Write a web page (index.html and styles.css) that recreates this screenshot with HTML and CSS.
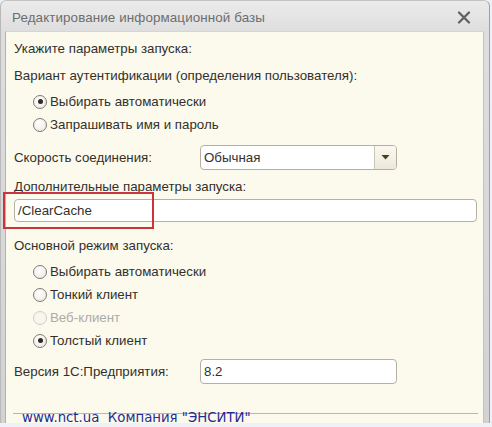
FILE: index.html
```html
<!DOCTYPE html>
<html lang="ru">
<head>
<meta charset="utf-8">
<link rel="stylesheet" href="styles.css">
</head>
<body>
<div class="window">
  <div class="titlebar">
    <span class="title">Редактирование информационной базы</span>
    <svg class="close" width="14" height="13" viewBox="0 0 14 13"><path d="M2 1.5 L12 11.5 M12 1.5 L2 11.5" stroke="#5f5f5f" stroke-width="2.2" stroke-linecap="round"/></svg>
  </div>
  <div class="panel">
    <div class="label first">Укажите параметры запуска:</div>
    <div class="label gap11">Вариант аутентификации (определения пользователя):</div>
    <div class="radios r1">
      <div class="radio-row"><span class="radio checked"></span><span>Выбирать автоматически</span></div>
      <div class="radio-row"><span class="radio"></span><span>Запрашивать имя и пароль</span></div>
    </div>
    <div class="field-row fr1">
      <span>Скорость соединения:</span>
      <div class="select"><span class="select-text">Обычная</span><span class="select-btn"><svg width="9" height="5" viewBox="0 0 9 5"><path d="M0.5 0 H8.5 L4.5 4.5 Z" fill="#4a3f1e"/></svg></span></div>
    </div>
    <div class="label gap9">Дополнительные параметры запуска:</div>
    <div class="input wide">/ClearCache</div>
    <div class="label gap16">Основной режим запуска:</div>
    <div class="radios r2">
      <div class="radio-row"><span class="radio"></span><span>Выбирать автоматически</span></div>
      <div class="radio-row"><span class="radio"></span><span>Тонкий клиент</span></div>
      <div class="radio-row disabled"><span class="radio"></span><span>Веб-клиент</span></div>
      <div class="radio-row"><span class="radio checked"></span><span>Толстый клиент</span></div>
    </div>
    <div class="field-row fr2">
      <span>Версия 1С:Предприятия:</span>
      <div class="input short">8.2</div>
    </div>
    <div class="footer-line"></div>
  </div>
  <div class="highlight"></div>
  <div class="watermark">www.nct.ua&nbsp; Компания "ЭНСИТИ"</div>
</div>
</body>
</html>
```
FILE: styles.css
```css
html, body {
  margin: 0;
  padding: 0;
}
body {
  width: 492px;
  height: 427px;
  background: #eef2f8;
  font-family: "Liberation Sans", Arial, sans-serif;
  font-size: 13.3px;
  color: #33302c;
  overflow: hidden;
}
.window {
  position: relative;
  width: 490px;
  height: 423px;
  display: flex;
  flex-direction: column;
  background: linear-gradient(to bottom, #ebebeb 0px, #dedede 30px, #d2d2d2 100%);
  border-left: 1px solid #b9b9b9;
  border-right: 1px solid #a0a0a0;
  border-top: 1px solid #c4c4c4;
  border-radius: 6px 6px 0 0;
  box-sizing: border-box;
}
.titlebar {
  height: 30px;
  flex: none;
  display: flex;
  align-items: center;
  justify-content: space-between;
  padding: 0 18px 0 11px;
}
.title {
  color: #6d6d6d;
  font-size: 13.4px;
  letter-spacing: 0.1px;
  padding-top: 2px;
}
.close {
  margin-top: 2px;
}
.panel {
  flex: 1;
  margin: 0 5px 0 4px;
  background: #fcfaec;
  border-left: 1px solid #b5b3a8;
  border-right: 1px solid #c6c4ba;
  border-top: 1px solid #d8d6cc;
  padding: 9px 7px 0 8px;
  display: flex;
  flex-direction: column;
  box-sizing: border-box;
}
.label {
  height: 16px;
  line-height: 16px;
  white-space: nowrap;
}
.gap11 { margin-top: 11px; }
.gap9 { margin-top: 9px; }
.gap16 { margin-top: 16px; }
.radios {
  display: flex;
  flex-direction: column;
  padding-left: 19px;
}
.r1 { margin-top: 6px; }
.r2 { margin-top: 6px; }
.radio-row {
  height: 23px;
  display: flex;
  align-items: center;
  gap: 3px;
  white-space: nowrap;
}
.radio {
  width: 14px;
  height: 14px;
  border-radius: 50%;
  border: 1px solid #7d7b76;
  background: radial-gradient(circle at 40% 35%, #ffffff 0%, #f2f0ea 60%, #dedbd2 100%);
  box-sizing: border-box;
  display: flex;
  align-items: center;
  justify-content: center;
  flex: none;
}
.radio.checked::after {
  content: "";
  width: 5px;
  height: 5px;
  border-radius: 50%;
  background: #2e2c2a;
}
.disabled {
  color: #ababab;
}
.disabled .radio {
  border-color: #cfcdc6;
  background: #f8f6ee;
}
.field-row {
  display: grid;
  grid-template-columns: 186px 197px;
  align-items: center;
  height: 25px;
}
.fr1 { margin-top: 9px; }
.fr2 { margin-top: 7px; }
.select {
  height: 25px;
  border: 1px solid #b4b1a2;
  border-radius: 4px;
  background: #ffffff;
  display: flex;
  box-sizing: border-box;
  overflow: hidden;
}
.select-text {
  flex: 1;
  padding-left: 3px;
  line-height: 23px;
}
.select-btn {
  width: 21px;
  border-left: 1px solid #c9c6b7;
  background: linear-gradient(to bottom, #fbf9ef, #ece9db);
  display: flex;
  align-items: center;
  justify-content: center;
}
.input {
  border: 1px solid #b4b1a2;
  border-radius: 4px;
  background: #ffffff;
  box-sizing: border-box;
  padding-left: 3px;
  white-space: nowrap;
}
.input.wide {
  margin-top: 4px;
  height: 23px;
  line-height: 21px;
  width: 463px;
}
.input.short {
  height: 25px;
  line-height: 23px;
}
.footer-line {
  margin-top: 29px;
  margin-left: -1px;
  width: 465px;
  height: 1px;
  background: #b9b7a8;
}
.highlight {
  position: absolute;
  left: 2px;
  top: 191px;
  width: 151px;
  height: 37px;
  border: 2px solid #c9353d;
  box-sizing: border-box;
}
.watermark {
  position: absolute;
  left: 21px;
  top: 409px;
  line-height: 15px;
  font-family: "DejaVu Sans", Verdana, sans-serif;
  font-size: 13.3px;
  color: #1f2c92;
  white-space: nowrap;
}
```
